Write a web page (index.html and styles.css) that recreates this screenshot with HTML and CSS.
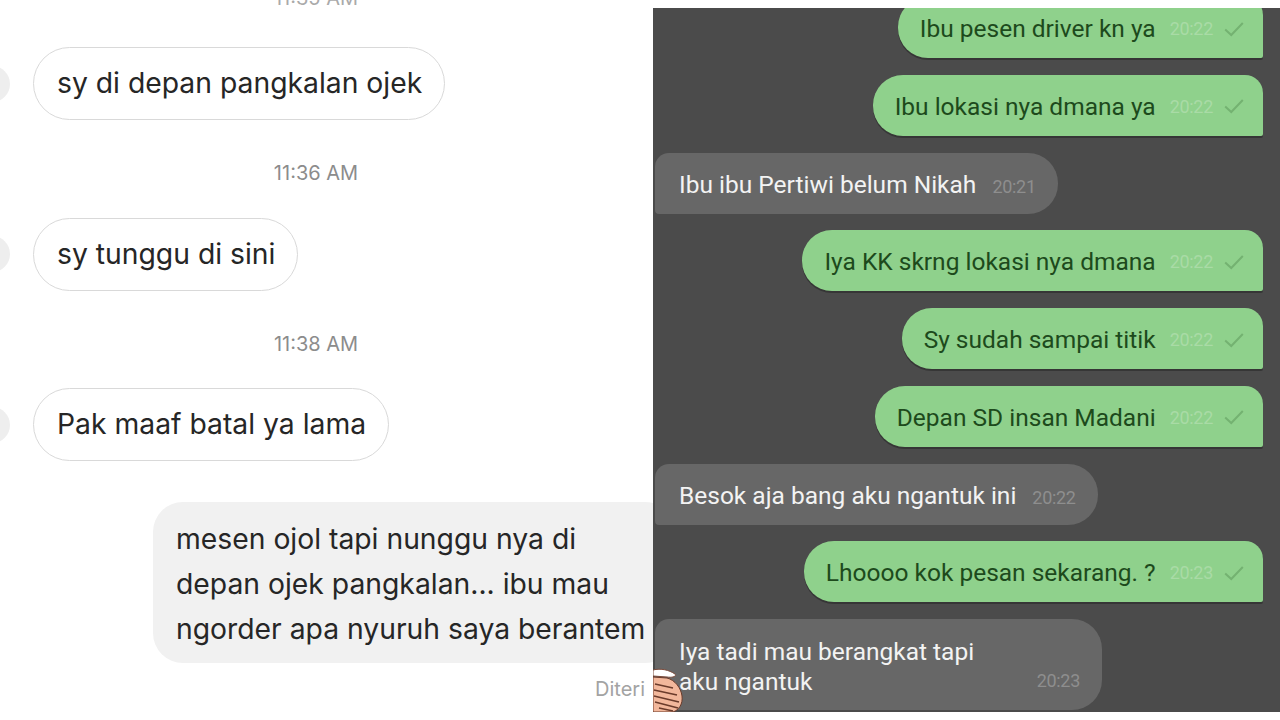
FILE: index.html
```html
<!DOCTYPE html>
<html>
<head>
<meta charset="utf-8">
<link rel="stylesheet" href="styles.css">
</head>
<body>
<div class="page">
  <section class="left">
    <div class="ltime cut">11:35 AM</div>
    <div class="row"><span class="avatar"></span><div class="lb">sy di depan pangkalan ojek</div></div>
    <div class="ltime">11:36 AM</div>
    <div class="row"><span class="avatar"></span><div class="lb">sy tunggu di sini</div></div>
    <div class="ltime">11:38 AM</div>
    <div class="row"><span class="avatar"></span><div class="lb">Pak maaf batal ya lama</div></div>
    <div class="sent">mesen ojol tapi nunggu nya di<br>depan ojek pangkalan... ibu mau<br>ngorder apa nyuruh saya berantem</div>
    <div class="status">Diteri</div>
  </section>
  <section class="right">
    <div class="msg out first"><span class="txt">Ibu pesen driver kn ya</span><span class="meta">20:22<svg class="chk" viewBox="0 0 20 16"><path d="M2 8.5 L7.5 13.5 L18 2.5"/></svg></span></div>
    <div class="msg out"><span class="txt">Ibu lokasi nya dmana ya</span><span class="meta">20:22<svg class="chk" viewBox="0 0 20 16"><path d="M2 8.5 L7.5 13.5 L18 2.5"/></svg></span></div>
    <div class="msg in"><span class="txt">Ibu ibu Pertiwi belum Nikah</span><span class="meta">20:21</span></div>
    <div class="msg out"><span class="txt">Iya KK skrng lokasi nya dmana</span><span class="meta">20:22<svg class="chk" viewBox="0 0 20 16"><path d="M2 8.5 L7.5 13.5 L18 2.5"/></svg></span></div>
    <div class="msg out"><span class="txt">Sy sudah sampai titik</span><span class="meta">20:22<svg class="chk" viewBox="0 0 20 16"><path d="M2 8.5 L7.5 13.5 L18 2.5"/></svg></span></div>
    <div class="msg out"><span class="txt">Depan SD insan Madani</span><span class="meta">20:22<svg class="chk" viewBox="0 0 20 16"><path d="M2 8.5 L7.5 13.5 L18 2.5"/></svg></span></div>
    <div class="msg in"><span class="txt">Besok aja bang aku ngantuk ini</span><span class="meta">20:22</span></div>
    <div class="msg out"><span class="txt">Lhoooo kok pesan sekarang. ?</span><span class="meta">20:23<svg class="chk" viewBox="0 0 20 16"><path d="M2 8.5 L7.5 13.5 L18 2.5"/></svg></span></div>
    <div class="msg in tall"><span class="txt">Iya tadi mau berangkat tapi<br>aku ngantuk</span><span class="meta">20:23</span></div>
    <svg class="sticker" viewBox="0 0 30 46">
      <path d="M0 4 C8 2 16 4 22 8 C24 10 20 12 14 11 L0 10 Z" fill="#fff" stroke="#7a4a3a" stroke-width="1"/>
      <path d="M0 11 L14 12 C22 14 28 22 29 30 C30 38 26 44 20 46 L0 46 Z" fill="#f2b79b" stroke="#6b3b2b" stroke-width="1"/>
      <path d="M2 18 L20 22 M1 24 L24 29 M1 30 L26 36 M2 36 L25 42 M6 42 L20 45" stroke="#6b3b2b" stroke-width="1.6" fill="none"/>
    </svg>
  </section>
</div>
</body>
</html>
```
FILE: styles.css
```css
html, body {
  margin: 0;
  padding: 0;
  background: #ffffff;
}
.page {
  display: flex;
  width: 1280px;
  height: 720px;
  overflow: hidden;
}
.left {
  width: 653px;
  height: 720px;
  flex: none;
  overflow: hidden;
  padding-left: 33px;
  box-sizing: border-box;
  display: flex;
  flex-direction: column;
  align-items: flex-start;
  font-family: Inter, "Liberation Sans", sans-serif;
  color: #262626;
  background: #fff;
}
.ltime {
  width: 566px;
  text-align: center;
  font-size: 20px;
  line-height: 22px;
  height: 22px;
  color: #8c8c8c;
  margin-top: 42px;
}
.ltime.cut {
  margin-top: -13px;
  color: #aaa;
}
.row {
  display: flex;
  align-items: center;
  margin-left: -33px;
  margin-top: 33.5px;
}
.ltime.cut + .row { margin-top: 38px; }
.avatar {
  width: 36px;
  height: 36px;
  border-radius: 50%;
  background: #eeeeee;
  margin-left: -26px;
  margin-right: 23px;
  flex: none;
}
.lb {
  height: 73px;
  box-sizing: border-box;
  border: 1.5px solid #d9d9d9;
  border-radius: 37px;
  padding: 0 22px 0 23px;
  line-height: 70px;
  font-size: 28.3px;
  white-space: nowrap;
  background: #fff;
}
.sent {
  margin-left: 120px;
  margin-top: 41px;
  height: 161px;
  box-sizing: border-box;
  padding: 15px 30px 11px 23px;
  background: #f1f1f1;
  border-radius: 30px;
  font-size: 28.3px;
  line-height: 45px;
  white-space: nowrap;
}
.status {
  align-self: flex-end;
  margin-top: 15px;
  margin-right: 8px;
  font-size: 20px;
  line-height: 22px;
  color: #a3a3a3;
}
.right {
  position: relative;
  width: 627px;
  height: 704px;
  margin-top: 8px;
  flex: none;
  background: #4b4b4b;
  overflow: hidden;
  box-sizing: border-box;
  padding-right: 17px;
  display: flex;
  flex-direction: column;
  align-items: flex-end;
  gap: 16.75px;
  font-family: Roboto, "Liberation Sans", sans-serif;
}
.msg {
  height: 61px;
  flex: none;
  box-sizing: border-box;
  display: flex;
  align-items: center;
  font-size: 24.5px;
  white-space: nowrap;
}
.msg.first { margin-top: -11px; }
.msg.out {
  background: #8fd18c;
  color: #1d4a1c;
  border-radius: 30px 18px 2px 30px;
  padding: 0 18px 0 22px;
  box-shadow: 0 2px 0 rgba(0,0,0,0.28);
}
.msg.in {
  align-self: flex-start;
  margin-left: 2px;
  background: #676767;
  color: #f3f3f3;
  border-radius: 14px 30px 30px 4px;
  padding: 0 22px 0 24px;
}
.txt { padding-top: 2px; }
.meta {
  display: flex;
  align-items: center;
  font-size: 18px;
  margin-left: 14px;
  color: #a9dba6;
  letter-spacing: -0.3px;
  padding-top: 2px;
}
.msg.in .meta {
  color: #8e8e8e;
  margin-left: 16px;
  padding-top: 6px;
}
.chk {
  width: 22px;
  height: 18px;
  margin-left: 10px;
  fill: none;
  stroke: #74b271;
  stroke-width: 1.8;
}
.msg.tall {
  width: 447px;
  justify-content: space-between;
  height: 91px;
  align-items: flex-start;
  padding-top: 16px;
  line-height: 30px;
}
.msg.tall .meta {
  align-self: flex-end;
  margin-bottom: 14px;
}
.sticker {
  position: absolute;
  left: 0;
  bottom: 0;
  width: 30px;
  height: 46px;
}
```
